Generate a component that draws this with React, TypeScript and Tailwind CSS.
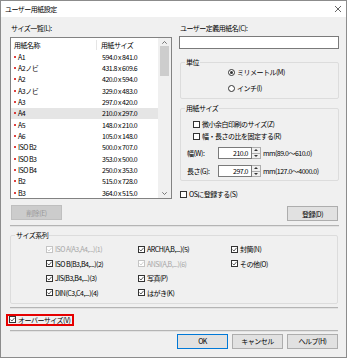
import React from "react";

const rows = [
  ["A1", "594.0 x 841.0"],
  ["A2ノビ", "431.8 x 609.6"],
  ["A2", "420.0 x 594.0"],
  ["A3ノビ", "329.0 x 483.0"],
  ["A3", "297.0 x 420.0"],
  ["A4", "210.0 x 297.0"],
  ["A5", "148.0 x 210.0"],
  ["A6", "105.0 x 148.0"],
  ["ISO B2", "500.0 x 707.0"],
  ["ISO B3", "353.0 x 500.0"],
  ["ISO B4", "250.0 x 353.0"],
  ["B2", "515.0 x 728.0"],
  ["B3", "364.0 x 515.0"],
];

const series = [
  { label: "ISO A(A3,A4,...)(1)", disabled: true },
  { label: "ARCH(A,B,...)(5)" },
  { label: "封筒(N)" },
  { label: "ISO B(B3,B4,...)(2)" },
  { label: "ANSI(A,B,...)(6)", disabled: true },
  { label: "その他(O)" },
  { label: "JIS(B3,B4,...)(3)" },
  { label: "写真(P)" },
  { label: "" },
  { label: "DIN(C3,C4,...)(4)" },
  { label: "はがき(K)" },
  { label: "" },
];

function Check({ checked = true, disabled = false }: { checked?: boolean; disabled?: boolean }) {
  return (
    <span
      className={`flex h-[7px] w-[7px] shrink-0 items-center justify-center border bg-white ${
        disabled ? "border-[#c4c4c4]" : "border-[#333333]"
      }`}
    >
      {checked && (
        <svg viewBox="0 0 5 5" className="h-[5px] w-[5px]">
          <path
            d="M0.5 2.6 L2 4 L4.6 0.8"
            fill="none"
            stroke={disabled ? "#c4c4c4" : "#333333"}
            strokeWidth="0.8"
          />
        </svg>
      )}
    </span>
  );
}

function CheckRow({ label, checked = true, disabled = false }: { label: string; checked?: boolean; disabled?: boolean }) {
  return (
    <div className="flex h-[10px] items-center gap-[2px] whitespace-nowrap">
      <Check checked={checked} disabled={disabled} />
      <span className={disabled ? "text-[#a6a6a6]" : "text-black"}>{label}</span>
    </div>
  );
}

function Radio({ label, selected = false }: { label: string; selected?: boolean }) {
  return (
    <div className="flex h-[10px] items-center gap-[2px]">
      <span className="flex h-[7px] w-[7px] items-center justify-center rounded-full border border-[#333333] bg-white">
        {selected && <span className="h-[3px] w-[3px] rounded-full bg-[#333333]" />}
      </span>
      <span>{label}</span>
    </div>
  );
}

function Button({ label, primary = false, disabled = false }: { label: string; primary?: boolean; disabled?: boolean }) {
  return (
    <div
      className={`flex h-[15px] w-[51px] items-center justify-center border ${
        disabled
          ? "border-[#bfbfbf] bg-[#cccccc] text-[#9a9a9a]"
          : primary
          ? "border-[#0078d7] bg-[#e1e1e1]"
          : "border-[#adadad] bg-[#e1e1e1]"
      }`}
    >
      {label}
    </div>
  );
}

function Spin({ value }: { value: string }) {
  return (
    <div className="flex h-[12px]">
      <div className="flex w-[34px] items-center justify-end border border-[#7a7a7a] bg-white pr-[3px]">{value}</div>
      <div className="flex w-[9px] flex-col border border-l-0 border-[#adadad] bg-[#f0f0f0]">
        <div className="flex flex-1 items-center justify-center border-b border-[#adadad]">
          <svg viewBox="0 0 4 2" className="h-[2px] w-[4px]">
            <path d="M0 2 L2 0 L4 2 Z" fill="#333" />
          </svg>
        </div>
        <div className="flex flex-1 items-center justify-center">
          <svg viewBox="0 0 4 2" className="h-[2px] w-[4px]">
            <path d="M0 0 L2 2 L4 0 Z" fill="#333" />
          </svg>
        </div>
      </div>
    </div>
  );
}

function Separator() {
  return <div className="h-[2px] border-t border-b border-t-[#b4b4b4] border-b-[#e2e2e2]" />;
}

export default function App() {
  return (
    <div className="h-[359px] w-[348px] bg-white font-['Noto_Sans_CJK_JP',sans-serif] text-[7px] leading-[10px] tracking-[-0.5px] text-black">
      <div className="flex h-[358px] w-[347px] flex-col border border-[#8c8c8c] bg-[#f0f0f0]">
        <div className="flex h-[16px] shrink-0 items-center justify-between bg-white pl-[4px] pr-[5px]">
          <span>ユーザー用紙設定</span>
          <svg viewBox="0 0 6 6" className="h-[6px] w-[6px]">
            <path d="M0 0 L6 6 M6 0 L0 6" stroke="#222" strokeWidth="0.7" />
          </svg>
        </div>

        <div className="ml-[9px] flex w-[329px] flex-col">
          <div className="flex gap-[7px]">
            {/* left column */}
            <div className="flex w-[162px] flex-col">
              <div className="mt-[5px] pl-[1px] leading-[12px]">サイズ一覧(L):</div>
              <div className="mt-[3px] flex border border-[#828282] bg-white">
                <div className="flex flex-1 flex-col">
                  <div className="flex h-[13px] items-center">
                    <div className="w-[86px] border-r border-[#e5e5e5] pl-[3px]">用紙名称</div>
                    <div className="pl-[4px]">用紙サイズ</div>
                  </div>
                  {rows.map(([name, size]) => (
                    <div
                      key={name}
                      className={`flex h-[11.33px] items-center ${name === "A4" ? "bg-[#e5e5e5]" : ""}`}
                    >
                      <div className="flex w-[86px] items-center pl-[3px]">
                        <span className="mr-[2px] h-[2px] w-[2px] rounded-full bg-[#d00000]" />
                        <span>{name}</span>
                      </div>
                      <div className="pl-[5px]">{size}</div>
                    </div>
                  ))}
                </div>
                <div className="flex w-[13px] flex-col bg-[#f0f0f0]">
                  <div className="flex h-[8px] items-center justify-center">
                    <svg viewBox="0 0 5 3" className="h-[3px] w-[5px]">
                      <path d="M0.3 2.7 L2.5 0.5 L4.7 2.7" fill="none" stroke="#555" strokeWidth="0.8" />
                    </svg>
                  </div>
                  <div className="mx-[2px] h-[30px] bg-[#cdcdcd]" />
                  <div className="flex-1" />
                  <div className="flex h-[10px] items-center justify-center">
                    <svg viewBox="0 0 5 3" className="h-[3px] w-[5px]">
                      <path d="M0.3 0.3 L2.5 2.5 L4.7 0.3" fill="none" stroke="#555" strokeWidth="0.8" />
                    </svg>
                  </div>
                </div>
              </div>
              <div className="ml-[1px] mt-[6px]">
                <Button label="削除(E)" disabled />
              </div>
            </div>

            {/* right column */}
            <div className="flex w-[160px] flex-col">
              <div className="mt-[5px] pl-[1px] leading-[12px]">ユーザー定義用紙名(C):</div>
              <div className="mt-[2px] h-[13px] border border-[#7a7a7a] bg-white" />

              <fieldset className="mt-[8px] ml-[1px] rounded-[2px] border border-[#dcdcdc] pb-[5px]">
                <legend className="ml-[4px] px-[1px]">単位</legend>
                <div className="pl-[47px]">
                  <Radio label="ミリメートル(M)" selected />
                  <div className="mt-[6px]">
                    <Radio label="インチ(I)" />
                  </div>
                </div>
              </fieldset>

              <fieldset className="mt-[4px] ml-[1px] rounded-[2px] border border-[#dcdcdc] pb-[3px]">
                <legend className="ml-[4px] px-[1px]">用紙サイズ</legend>
                <div className="mt-[6px] pl-[12px]">
                  <CheckRow label="微小余白印刷のサイズ(Z)" checked={false} />
                </div>
                <div className="mt-[2px] pl-[12px]">
                  <CheckRow label="幅・長さの比を固定する(R)" checked={false} />
                </div>
                <div className="mt-[6px] flex items-center pl-[6px]">
                  <span className="w-[31px]">幅(W):</span>
                  <Spin value="210.0" />
                  <span className="ml-[2px]">mm(89.0～610.0)</span>
                </div>
                <div className="mt-[6px] flex items-center pl-[6px]">
                  <span className="w-[31px]">長さ(G):</span>
                  <Spin value="297.0" />
                  <span className="ml-[2px]">mm(127.0～4000.0)</span>
                </div>
              </fieldset>

              <div className="mt-[8px] ml-[1px]">
                <CheckRow label="OSに登録する(S)" checked={false} />
              </div>
              <div className="mt-[7px] flex justify-end pr-[1px]">
                <Button label="登録(D)" />
              </div>
            </div>
          </div>

          <div className="mt-[4px]">
            <Separator />
          </div>

          <fieldset className="mt-[3px] w-[328px] rounded-[2px] border border-[#dcdcdc] pb-[5px]">
            <legend className="ml-[4px] px-[1px]">サイズ系列</legend>
            <div className="mt-[4px] grid grid-cols-[92px_93px_1fr] gap-y-[4.5px] pl-[35px]">
              {series.map((s, i) =>
                s.label ? (
                  <CheckRow key={i} label={s.label} disabled={s.disabled} />
                ) : (
                  <div key={i} className="h-[10px]" />
                )
              )}
            </div>
          </fieldset>

          <div className="mt-[3px] w-[328px]">
            <Separator />
          </div>

          <div className="-ml-[4px] mt-[5px] flex h-[12px] w-fit items-center border-2 border-[#e60000] pl-[1px] pr-[2px]">
            <CheckRow label="オーバーサイズ(V)" />
          </div>

          <div className="mt-[4px] w-[328px]">
            <Separator />
          </div>

          <div className="mt-[2px] flex justify-end gap-[4px] pr-[1px]">
            <Button label="OK" primary />
            <Button label="キャンセル" />
            <Button label="ヘルプ(H)" />
          </div>
        </div>
      </div>
    </div>
  );
}
